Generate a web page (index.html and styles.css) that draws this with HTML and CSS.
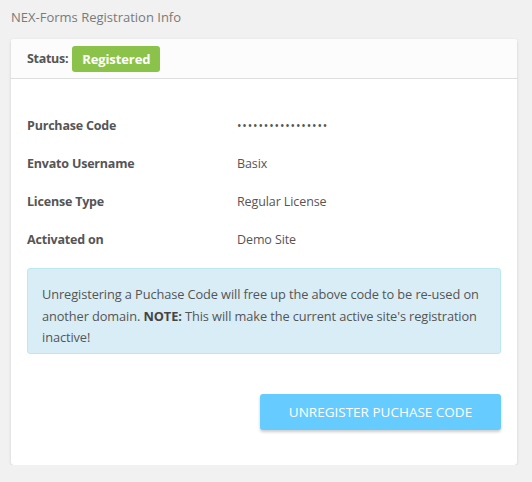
FILE: index.html
```html
<!DOCTYPE html>
<html>
<head>
<meta charset="utf-8">
<link rel="stylesheet" href="styles.css">
</head>
<body>
<div class="page">
  <h1 class="page-title">NEX-Forms Registration Info</h1>
  <div class="card">
    <div class="card-header">
      <span class="status-label">Status:</span>
      <span class="badge">Registered</span>
    </div>
    <div class="card-body">
      <div class="info">
        <div class="row"><div class="label">Purchase Code</div><div class="value dots">•••••••••••••••••</div></div>
        <div class="row"><div class="label">Envato Username</div><div class="value">Basix</div></div>
        <div class="row"><div class="label">License Type</div><div class="value">Regular License</div></div>
        <div class="row"><div class="label">Activated on</div><div class="value">Demo Site</div></div>
      </div>
      <div class="alert">Unregistering a Puchase Code will free up the above code to be re-used on another domain. <strong>NOTE:</strong> This will make the current active site's registration inactive!</div>
      <div class="actions">
        <button class="btn">UNREGISTER PUCHASE CODE</button>
      </div>
    </div>
  </div>
</div>
</body>
</html>
```

FILE: styles.css
```css
html, body {
  margin: 0;
  padding: 0;
  background: #f1f1f1;
}
body {
  font-family: "Open Sans", "Noto Sans", sans-serif;
  font-size: 12.5px;
  color: #555;
}
.page {
  padding: 8px 15px 0 11px;
}
.page-title {
  margin: 0 0 13px 0;
  font-size: 13px;
  font-weight: normal;
  color: #7a7a7a;
  line-height: 18px;
}
.card {
  background: #fff;
  border-radius: 3px;
  box-shadow: 0 1px 3px rgba(0,0,0,0.15);
  height: 426px;
  display: flex;
  flex-direction: column;
}
.card-header {
  background: #fcfcfc;
  border-bottom: 1px solid #dedede;
  height: 39px;
  display: flex;
  align-items: center;
  padding-left: 16px;
  gap: 4px;
  border-radius: 3px 3px 0 0;
}
.status-label {
  font-weight: bold;
  color: #555;
  font-size: 12.5px;
  letter-spacing: -0.3px;
}
.badge {
  background: #8bc34a;
  color: #fff;
  font-weight: bold;
  font-size: 13px;
  border-radius: 3px;
  height: 26px;
  line-height: 26px;
  padding: 0 10px;
  letter-spacing: -0.1px;
}
.card-body {
  padding: 27px 16px 0 16px;
}
.info {
  display: flex;
  flex-direction: column;
}
.row {
  display: grid;
  grid-template-columns: 210px 1fr;
  height: 38px;
  align-items: center;
}
.label {
  font-weight: bold;
  letter-spacing: -0.2px;
}
.value {
  letter-spacing: -0.1px;
}
.dots {
  font-size: 12px;
  letter-spacing: 0.85px;
}
.alert {
  margin-top: 10px;
  background: #d9edf7;
  border: 1px solid #bce8f1;
  border-radius: 3px;
  padding: 15px 14px 4px 14px;
  line-height: 21.5px;
  font-size: 12.8px;
  letter-spacing: -0.1px;
}
.alert strong {
  color: #444;
}
.actions {
  display: flex;
  justify-content: flex-end;
  margin-top: 40px;
}
.btn {
  font-family: "Open Sans", "Noto Sans", sans-serif;
  background: #66ccff;
  color: #fff;
  border: none;
  border-radius: 3px;
  width: 241px;
  height: 36px;
  font-size: 13.5px;
  box-shadow: 0 2px 3px rgba(0,0,0,0.2);
}
```
